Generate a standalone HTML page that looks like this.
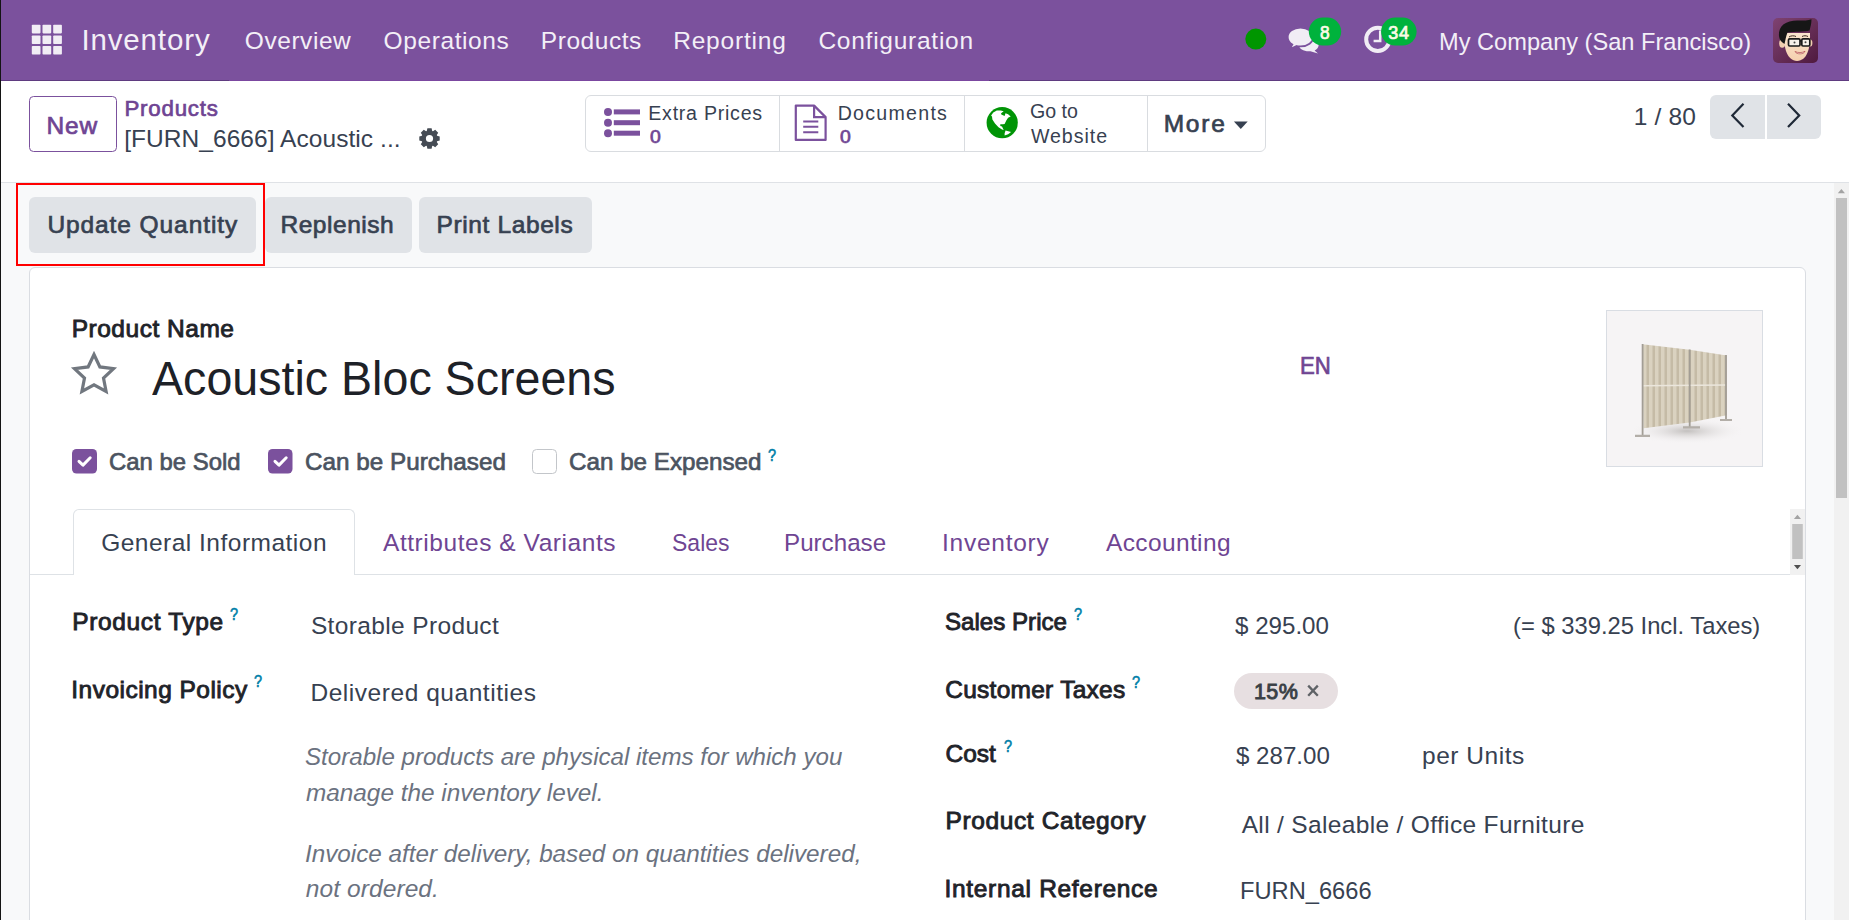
<!DOCTYPE html>
<html><head><meta charset="utf-8"><style>
html,body{margin:0;padding:0;width:1849px;height:920px;overflow:hidden;background:#fff;font-family:"Liberation Sans",sans-serif}
.a{position:absolute;box-sizing:border-box}
.t{position:absolute;white-space:nowrap;line-height:normal}
.q{font-size:16.5px;font-weight:400;-webkit-text-stroke:0.6px #0180a8;color:#0180a8;transform:scaleX(0.88);transform-origin:0 0}
</style></head><body>
<!-- content background -->
<div class="a" style="left:0;top:183px;width:1849px;height:737px;background:#f8f9fa"></div>
<!-- navbar -->
<div class="a" style="left:0;top:0;width:1849px;height:81px;background:#7b519d;border-bottom:1px solid #5f3b80"></div>
<div class="a" style="left:229px;top:80px;width:760px;height:1px;background:#7b47a0"></div>
<!-- left dark line -->
<div class="a" style="left:0;top:0;width:1px;height:920px;background:#141414"></div>
<!-- grid icon -->
<svg class="a" style="left:0;top:0" width="80" height="80">
 <g fill="#f1edf5">
  <rect x="31.8" y="24.8" width="8.7" height="8.6" rx="0.8"/><rect x="42.5" y="24.8" width="8.7" height="8.6" rx="0.8"/><rect x="53.2" y="24.8" width="8.7" height="8.6" rx="0.8"/>
  <rect x="31.8" y="35.4" width="8.7" height="8.6" rx="0.8"/><rect x="42.5" y="35.4" width="8.7" height="8.6" rx="0.8"/><rect x="53.2" y="35.4" width="8.7" height="8.6" rx="0.8"/>
  <rect x="31.8" y="46.0" width="8.7" height="8.6" rx="0.8"/><rect x="42.5" y="46.0" width="8.7" height="8.6" rx="0.8"/><rect x="53.2" y="46.0" width="8.7" height="8.6" rx="0.8"/>
 </g>
</svg>
<!-- systray icons -->
<svg class="a" style="left:1230px;top:0" width="200" height="80">
 <circle cx="25.8" cy="39.1" r="10.5" fill="#009600"/>
 <!-- comments icon -->
 <g fill="#f1edf5">
  <path d="M69 45.3 c0-3.4 4.4-6 9.8-6 s9.8 2.6 9.8 6 c0 2.2-1.6 4-4 5.1 l3.4 3.1 -7.6-2.3 c-.5.1-1 .1-1.6.1 -5.4 0-9.8-2.6-9.8-6z"/>
  <path d="M57.7 37 C57.7 31.8 63.4 27.6 70.5 27.6 S83.3 31.8 83.3 37 S77.6 46.4 70.5 46.4 C69.2 46.4 67.9 46.3 66.7 46 L59.6 49.2 L62.3 44.5 C59.5 42.9 57.7 40.2 57.7 37Z" stroke="#7b519d" stroke-width="1.8"/>
 </g>
 <rect x="78.8" y="17.6" width="32.4" height="28" rx="14" fill="#00b23c"/>
 <!-- clock -->
 <circle cx="147.8" cy="39.4" r="11.6" fill="none" stroke="#f1edf5" stroke-width="4"/>
 <path d="M150.2 30.5 v10.6 h-6.6" fill="none" stroke="#f1edf5" stroke-width="2.5"/>
 <rect x="151.1" y="17.6" width="35.5" height="28" rx="14" fill="#00b23c"/>
</svg>
<!-- avatar -->
<svg class="a" style="left:1773px;top:18px" width="45" height="45" viewBox="0 0 45 45">
 <defs><linearGradient id="ag" x1="0" y1="0" x2="1" y2="1"><stop offset="0" stop-color="#7f4372"/><stop offset="1" stop-color="#4f1a3e"/></linearGradient>
 <linearGradient id="sk" x1="0" y1="0" x2="0" y2="1"><stop offset="0" stop-color="#fbe6cf"/><stop offset="1" stop-color="#f5cfae"/></linearGradient></defs>
 <rect width="45" height="45" rx="5" fill="url(#ag)"/>
 <ellipse cx="9.2" cy="25.5" rx="3" ry="4.2" fill="#f2cfb0"/>
 <ellipse cx="37.2" cy="25" rx="2.2" ry="3.6" fill="#f2cfb0"/>
 <path d="M11 15 C10.5 30 14 42.5 24 43 C34 42.5 37.5 31 37 15 Z" fill="url(#sk)"/>
 <path d="M6 18 C5 7 14 2 26 2.5 C31 2.5 35 2.5 38.5 1.2 C38.5 5 37.5 9 36.5 12.5 C31 14 22 13.5 14.5 14.5 C13 18 12.5 22 11.5 26 C8 24 6.2 21 6 18Z" fill="#161616"/>
 <path d="M16 19 C18 17.5 21 17.5 23 18.5 M29 18.5 C31 17.5 33 17.5 35 18.5" stroke="#3a2a20" stroke-width="1" fill="none"/>
 <rect x="15.5" y="20.8" width="11.5" height="7.2" rx="1.2" fill="#f7f1ea" stroke="#1a1a1a" stroke-width="1.7"/>
 <rect x="28.8" y="20.8" width="8" height="7.2" rx="1.2" fill="#f7f1ea" stroke="#1a1a1a" stroke-width="1.7"/>
 <path d="M27 23 h1.8" stroke="#1a1a1a" stroke-width="1.5"/>
 <circle cx="21.5" cy="24.5" r="1" fill="#444"/><circle cx="32.5" cy="24.2" r="1" fill="#444"/>
 <path d="M22 33.5 C25 35 29 35 32 33.3 C31 36.5 23.5 36.8 22 33.5Z" fill="#fff" stroke="#b04040" stroke-width="0.7"/>
</svg>

<!-- control panel -->
<div class="a" style="left:1px;top:182px;width:1848px;height:1px;background:#dfe2e6"></div>
<div class="a" style="left:29px;top:96px;width:88px;height:56px;border:1px solid #7b519d;border-radius:4.5px;background:#fff"></div>
<!-- gear -->
<svg class="a" style="left:416.7px;top:125.7px" width="25" height="25" viewBox="0 0 25 25">
 <path d="M9.77,4.90 L10.40,2.30 L14.60,2.30 L15.23,4.90 L15.94,5.20 L18.23,3.80 L21.20,6.77 L19.80,9.06 L20.10,9.77 L22.70,10.40 L22.70,14.60 L20.10,15.23 L19.80,15.94 L21.20,18.23 L18.23,21.20 L15.94,19.80 L15.23,20.10 L14.60,22.70 L10.40,22.70 L9.77,20.10 L9.06,19.80 L6.77,21.20 L3.80,18.23 L5.20,15.94 L4.90,15.23 L2.30,14.60 L2.30,10.40 L4.90,9.77 L5.20,9.06 L3.80,6.77 L6.77,3.80 L9.06,5.20Z M16.10,12.50 A3.6,3.6 0 1 0 8.90,12.50 A3.6,3.6 0 1 0 16.10,12.50Z" fill="#454b54" fill-rule="evenodd"/>
</svg>
<!-- smart buttons group -->
<div class="a" style="left:584.5px;top:95px;width:681.5px;height:57px;border:1px solid #d9dce0;border-radius:6px;background:#fff"></div>
<div class="a" style="left:779px;top:96px;width:1px;height:55px;background:#d9dce0"></div>
<div class="a" style="left:964px;top:96px;width:1px;height:55px;background:#d9dce0"></div>
<div class="a" style="left:1146.5px;top:96px;width:1px;height:55px;background:#d9dce0"></div>
<!-- list icon -->
<svg class="a" style="left:600px;top:104px" width="45" height="38">
 <g fill="#7b519d">
  <circle cx="8" cy="7.9" r="4"/><circle cx="8" cy="18.7" r="4"/><circle cx="8" cy="29.2" r="4"/>
  <rect x="13.8" y="5.4" width="26.2" height="5"/><rect x="13.8" y="16.2" width="26.2" height="5"/><rect x="13.8" y="26.7" width="26.2" height="5"/>
 </g>
</svg>
<!-- document icon -->
<svg class="a" style="left:792px;top:102px" width="40" height="42">
 <path d="M3.8 3.6 h18.3 l11.5 11.5 v22.8 h-29.8z" fill="none" stroke="#7b519d" stroke-width="2.2" stroke-linejoin="round"/>
 <path d="M22.1 3.6 v11.5 h11.5" fill="none" stroke="#7b519d" stroke-width="2.2"/>
 <path d="M11.2 19.5 h15.1 M11.2 24.7 h15.1 M11.2 30.3 h15.1" stroke="#7b519d" stroke-width="2.1"/>
</svg>
<!-- globe -->
<svg class="a" style="left:984px;top:104px" width="36" height="37" viewBox="0 0 36 37">
 <circle cx="18.2" cy="18.7" r="15.6" fill="#009406"/>
 <path d="M7.1 11.6 L9.3 8.6 L12.8 6.6 L16.7 6.4 L19.7 7.3 L17.1 9.2 L17.3 10.5 L20.6 12 L21.5 9.2 L24.1 10.3 L26.7 12.5 L24.1 13.8 L22.3 16.4 L20.6 19.9 L18.9 20.3 L16.3 20.3 L16.3 22 L18 22.5 L19.7 26 L18 25.5 L14.5 23.3 L11 19.4 L8.4 15.5 L8 12.5Z" fill="#fff"/>
 <path d="M21.5 26.4 L27.1 28.1 L24.1 30.3 L20.6 31.6 L20.6 29.4Z" fill="#fff"/>
</svg>
<!-- caret -->
<svg class="a" style="left:1230px;top:118px" width="22" height="15">
 <path d="M3.9 3.5 h13.8 l-6.9 7.6z" fill="#374151"/>
</svg>
<!-- pager buttons -->
<div class="a" style="left:1710px;top:95px;width:55px;height:43.5px;background:#e0e3e7;border-radius:6px 0 0 6px"></div>
<div class="a" style="left:1767px;top:95px;width:54px;height:43.5px;background:#e0e3e7;border-radius:0 6px 6px 0"></div>
<svg class="a" style="left:1710px;top:95px" width="111" height="44">
 <path d="M33.5 8.8 l-11.2 11.6 11.2 11.6" fill="none" stroke="#1f2937" stroke-width="2.2"/>
 <path d="M78 8.8 l11.2 11.6 -11.2 11.6" fill="none" stroke="#1f2937" stroke-width="2.2"/>
</svg>

<!-- action buttons -->
<div class="a" style="left:29px;top:197px;width:227px;height:56px;background:#e0e3e7;border-radius:6px"></div>
<div class="a" style="left:265px;top:197px;width:147px;height:56px;background:#e0e3e7;border-radius:6px"></div>
<div class="a" style="left:419px;top:197px;width:173px;height:56px;background:#e0e3e7;border-radius:6px"></div>
<div class="a" style="left:16px;top:183px;width:249px;height:83px;border:2px solid #ff0000"></div>

<!-- main scrollbar -->
<div class="a" style="left:1834px;top:183px;width:15px;height:737px;background:#f1f1f1"></div>
<svg class="a" style="left:1834px;top:183px" width="15" height="20"><path d="M3.8 10.3 h7.2 l-3.6-4.3z" fill="#a3a3a3"/></svg>
<div class="a" style="left:1836px;top:198px;width:11px;height:300px;background:#c1c1c1"></div>

<!-- sheet -->
<div class="a" style="left:29px;top:267px;width:1777px;height:700px;background:#fff;border:1px solid #dadde2;border-radius:6px"></div>

<!-- star -->
<svg class="a" style="left:68px;top:349px" width="52" height="50" viewBox="0 0 52 50">
 <path d="M26 5.5 l5.9 12.4 13.6 1.7 -10 9.4 2.6 13.5 -12.1-6.6 -12.1 6.6 2.6-13.5 -10-9.4 13.6-1.7z" fill="none" stroke="#71777f" stroke-width="3.2" stroke-linejoin="miter"/>
</svg>

<!-- product image -->
<div class="a" style="left:1606px;top:310px;width:157px;height:157px;border:1px solid #d9dde3;background:#f6f4f5"></div>
<svg class="a" style="left:1607px;top:311px" width="155" height="155" viewBox="0 0 155 155">
 <defs><radialGradient id="sh" cx="0.5" cy="0.5" r="0.5"><stop offset="0" stop-color="#bdbab8" stop-opacity="0.9"/><stop offset="1" stop-color="#f6f4f5" stop-opacity="0"/></radialGradient>
 <pattern id="rib" width="6" height="10" patternUnits="userSpaceOnUse"><rect width="6" height="10" fill="#dad2c0"/><rect x="3.5" width="2.5" height="10" fill="#c5bba6"/></pattern></defs>
 <ellipse cx="80" cy="120" rx="58" ry="13" fill="url(#sh)"/>
 <path d="M35.4 33.3 L82.7 38.8 L82.7 111.6 L36.5 117.2 Z" fill="url(#rib)"/>
 <path d="M82.7 38.8 L119.7 44.4 L119.7 104.2 L82.7 111.6 Z" fill="url(#rib)"/>
 <path d="M36 74.7 L119.7 73.9" stroke="#ebe6dc" stroke-width="1.5"/>
 <path d="M35.6 33 V124.5 M82.7 38.5 V116 M119 44 V108.7" stroke="#a29d95" stroke-width="1.8"/>
 <path d="M28 124.8 h15 M76 116.3 h17 M113 109 h12" stroke="#b3aea8" stroke-width="2.2"/>
</svg>

<!-- checkboxes -->
<svg class="a" style="left:72px;top:449px" width="25" height="25"><rect x="0" y="0" width="25" height="24.5" rx="4.5" fill="#7b519d"/><path d="M7 12.3 l4 3.8 7.2-7.3" fill="none" stroke="#fff" stroke-width="3" stroke-linecap="round" stroke-linejoin="round"/></svg>
<svg class="a" style="left:268px;top:449px" width="25" height="25"><rect x="0" y="0" width="24.5" height="24.5" rx="4.5" fill="#7b519d"/><path d="M7 12.3 l4 3.8 7.2-7.3" fill="none" stroke="#fff" stroke-width="3" stroke-linecap="round" stroke-linejoin="round"/></svg>
<div class="a" style="left:532px;top:449px;width:25px;height:24.5px;border:1px solid #c3c6ca;border-radius:4.5px;background:#fff"></div>

<!-- tabs -->
<div class="a" style="left:29.5px;top:574px;width:1761px;height:1px;background:#dee2e6"></div>
<div class="a" style="left:72.5px;top:509px;width:282.5px;height:66px;border:1px solid #dee2e6;border-bottom:none;border-radius:6px 6px 0 0;background:#fff"></div>
<!-- tab scrollbar -->
<div class="a" style="left:1790px;top:509px;width:15px;height:66px;background:#f1f1f1"></div>
<svg class="a" style="left:1790px;top:509px" width="15" height="66">
 <path d="M3.9 10 h7.1 l-3.55-4.2z" fill="#a3a3a3"/>
 <rect x="2.2" y="15" width="10.6" height="35" fill="#c1c1c1"/>
 <path d="M3.9 56 h7.1 l-3.55 4.2z" fill="#505050"/>
</svg>

<!-- tag -->
<div class="a" style="left:1234px;top:673px;width:104px;height:36px;border-radius:18px;background:#e7dfe1"></div>
<svg class="a" style="left:1303px;top:680px" width="20" height="22"><path d="M5.2 5.6 l9.6 10.2 M14.8 5.6 l-9.6 10.2" stroke="#5f6266" stroke-width="2.3"/></svg>

<div class="t" style="left:81.40px;top:22.50px;color:#f3eff7;font-size:29.5px;font-weight:400;letter-spacing:0.863px;">Inventory</div>
<div class="t" style="left:244.80px;top:27.20px;color:#f3eff7;font-size:24.5px;font-weight:400;letter-spacing:0.557px;">Overview</div>
<div class="t" style="left:383.60px;top:27.10px;color:#f3eff7;font-size:24.5px;font-weight:400;letter-spacing:0.589px;">Operations</div>
<div class="t" style="left:540.80px;top:27.10px;color:#f3eff7;font-size:24.5px;font-weight:400;letter-spacing:0.543px;">Products</div>
<div class="t" style="left:673.20px;top:27.00px;color:#f3eff7;font-size:24.5px;font-weight:400;letter-spacing:0.800px;">Reporting</div>
<div class="t" style="left:818.40px;top:27.00px;color:#f3eff7;font-size:24.5px;font-weight:400;letter-spacing:0.750px;">Configuration</div>
<div class="t" style="left:1438.50px;top:27.80px;color:#f3eff7;font-size:24.5px;font-weight:400;letter-spacing:0.000px;transform:scaleX(0.963);transform-origin:2.0px 0;">My Company (San Francisco)</div>
<div class="t" style="left:1320.40px;top:22.70px;color:#fbfbe6;font-size:18px;font-weight:400;-webkit-text-stroke:0.7px currentColor;letter-spacing:0.000px;transform:scaleX(0.960);transform-origin:0.0px 0;">8</div>
<div class="t" style="left:1388.20px;top:22.70px;color:#fbfbe6;font-size:18px;font-weight:400;-webkit-text-stroke:0.7px currentColor;letter-spacing:0.800px;">34</div>
<div class="t" style="left:46.60px;top:111.50px;color:#6f4593;font-size:24.5px;font-weight:400;-webkit-text-stroke:0.7px currentColor;letter-spacing:0.750px;">New</div>
<div class="t" style="left:124.40px;top:96.40px;color:#6f4593;font-size:22.3px;font-weight:400;-webkit-text-stroke:0.7px currentColor;letter-spacing:0.786px;">Products</div>
<div class="t" style="left:124.20px;top:124.80px;color:#374151;font-size:24.5px;font-weight:400;letter-spacing:0.057px;">[FURN_6666] Acoustic ...</div>
<div class="t" style="left:648.30px;top:102.40px;color:#374151;font-size:19.6px;font-weight:400;letter-spacing:0.745px;">Extra Prices</div>
<div class="t" style="left:650.30px;top:125.60px;color:#6f4593;font-size:18.5px;font-weight:400;-webkit-text-stroke:0.7px currentColor;letter-spacing:0.000px;transform:scaleX(1.050);transform-origin:0.0px 0;">0</div>
<div class="t" style="left:837.70px;top:102.40px;color:#374151;font-size:19.6px;font-weight:400;letter-spacing:1.262px;">Documents</div>
<div class="t" style="left:839.70px;top:125.60px;color:#6f4593;font-size:18.5px;font-weight:400;-webkit-text-stroke:0.7px currentColor;letter-spacing:0.000px;transform:scaleX(1.050);transform-origin:0.0px 0;">0</div>
<div class="t" style="left:1029.90px;top:99.50px;color:#374151;font-size:19.6px;font-weight:400;letter-spacing:0.000px;">Go to</div>
<div class="t" style="left:1030.90px;top:125.40px;color:#374151;font-size:19.6px;font-weight:400;letter-spacing:0.967px;">Website</div>
<div class="t" style="left:1163.70px;top:110.00px;color:#374151;font-size:24.5px;font-weight:400;-webkit-text-stroke:0.7px currentColor;letter-spacing:1.767px;">More</div>
<div class="t" style="left:1633.80px;top:102.80px;color:#374151;font-size:24.5px;font-weight:400;letter-spacing:0.140px;">1 / 80</div>
<div class="t" style="left:47.40px;top:210.60px;color:#374151;font-size:24.5px;font-weight:400;-webkit-text-stroke:0.7px currentColor;letter-spacing:0.914px;">Update Quantity</div>
<div class="t" style="left:280.40px;top:210.60px;color:#374151;font-size:24.5px;font-weight:400;-webkit-text-stroke:0.7px currentColor;letter-spacing:0.550px;">Replenish</div>
<div class="t" style="left:436.60px;top:210.60px;color:#374151;font-size:24.5px;font-weight:400;-webkit-text-stroke:0.7px currentColor;letter-spacing:0.609px;">Print Labels</div>
<div class="t" style="left:71.70px;top:315.00px;color:#1f2329;font-size:24.5px;font-weight:400;-webkit-text-stroke:0.9px currentColor;letter-spacing:0.518px;">Product Name</div>
<div class="t" style="left:152.20px;top:350.90px;color:#1d2127;font-size:47.6px;font-weight:400;letter-spacing:0.000px;transform:scaleX(0.979);transform-origin:0.0px 0;">Acoustic Bloc Screens</div>
<div class="t" style="left:1299.90px;top:351.70px;color:#6f4593;font-size:24px;font-weight:400;-webkit-text-stroke:0.7px currentColor;letter-spacing:0.000px;transform:scaleX(0.923);transform-origin:1.0px 0;">EN</div>
<div class="t" style="left:109.30px;top:447.80px;color:#4b5360;font-size:24.5px;font-weight:400;-webkit-text-stroke:0.7px currentColor;letter-spacing:0.000px;transform:scaleX(0.976);transform-origin:1.0px 0;">Can be Sold</div>
<div class="t" style="left:304.80px;top:447.80px;color:#4b5360;font-size:24.5px;font-weight:400;-webkit-text-stroke:0.7px currentColor;letter-spacing:0.000px;transform:scaleX(0.990);transform-origin:1.0px 0;">Can be Purchased</div>
<div class="t" style="left:568.80px;top:447.80px;color:#4b5360;font-size:24.5px;font-weight:400;-webkit-text-stroke:0.7px currentColor;letter-spacing:0.000px;transform:scaleX(0.988);transform-origin:1.0px 0;">Can be Expensed</div>
<div class="t" style="left:101.20px;top:528.80px;color:#374151;font-size:24.5px;font-weight:400;letter-spacing:0.489px;">General Information</div>
<div class="t" style="left:383.00px;top:528.80px;color:#6f4593;font-size:24.5px;font-weight:400;letter-spacing:0.550px;">Attributes &amp; Variants</div>
<div class="t" style="left:671.50px;top:528.80px;color:#6f4593;font-size:24.5px;font-weight:400;letter-spacing:0.000px;transform:scaleX(0.937);transform-origin:1.0px 0;">Sales</div>
<div class="t" style="left:784.00px;top:528.80px;color:#6f4593;font-size:24.5px;font-weight:400;letter-spacing:0.000px;transform:scaleX(0.986);transform-origin:2.0px 0;">Purchase</div>
<div class="t" style="left:942.00px;top:528.80px;color:#6f4593;font-size:24.5px;font-weight:400;letter-spacing:0.750px;">Inventory</div>
<div class="t" style="left:1106.00px;top:528.80px;color:#6f4593;font-size:24.5px;font-weight:400;letter-spacing:0.367px;">Accounting</div>
<div class="t" style="left:72.30px;top:607.90px;color:#1f2329;font-size:24.5px;font-weight:400;-webkit-text-stroke:0.9px currentColor;letter-spacing:0.636px;">Product Type</div>
<div class="t" style="left:71.30px;top:676.00px;color:#1f2329;font-size:24.5px;font-weight:400;-webkit-text-stroke:0.9px currentColor;letter-spacing:0.473px;">Invoicing Policy</div>
<div class="t" style="left:310.90px;top:612.00px;color:#374151;font-size:24.5px;font-weight:400;letter-spacing:0.360px;">Storable Product</div>
<div class="t" style="left:310.40px;top:679.30px;color:#374151;font-size:24.5px;font-weight:400;letter-spacing:0.547px;">Delivered quantities</div>
<div class="t" style="left:304.70px;top:742.80px;color:#6b7280;font-size:24.5px;font-weight:400;font-style:italic;letter-spacing:0.000px;transform:scaleX(0.984);transform-origin:1.0px 0;">Storable products are physical items for which you</div>
<div class="t" style="left:305.70px;top:779.40px;color:#6b7280;font-size:24.5px;font-weight:400;font-style:italic;letter-spacing:0.000px;transform:scaleX(0.993);transform-origin:0.0px 0;">manage the inventory level.</div>
<div class="t" style="left:304.70px;top:839.50px;color:#6b7280;font-size:24.5px;font-weight:400;font-style:italic;letter-spacing:0.000px;transform:scaleX(0.990);transform-origin:1.0px 0;">Invoice after delivery, based on quantities delivered,</div>
<div class="t" style="left:305.70px;top:875.30px;color:#6b7280;font-size:24.5px;font-weight:400;font-style:italic;letter-spacing:0.100px;">not ordered.</div>
<div class="t" style="left:945.20px;top:607.90px;color:#1f2329;font-size:24.5px;font-weight:400;-webkit-text-stroke:0.9px currentColor;letter-spacing:0.000px;transform:scaleX(0.984);transform-origin:1.0px 0;">Sales Price</div>
<div class="t" style="left:945.20px;top:676.00px;color:#1f2329;font-size:24.5px;font-weight:400;-webkit-text-stroke:0.9px currentColor;letter-spacing:0.269px;">Customer Taxes</div>
<div class="t" style="left:945.50px;top:739.70px;color:#1f2329;font-size:24.5px;font-weight:400;-webkit-text-stroke:0.9px currentColor;letter-spacing:0.000px;">Cost</div>
<div class="t" style="left:945.50px;top:806.80px;color:#1f2329;font-size:24.5px;font-weight:400;-webkit-text-stroke:0.9px currentColor;letter-spacing:0.620px;">Product Category</div>
<div class="t" style="left:944.50px;top:874.50px;color:#1f2329;font-size:24.5px;font-weight:400;-webkit-text-stroke:0.9px currentColor;letter-spacing:0.682px;">Internal Reference</div>
<div class="t" style="left:1235.40px;top:612.00px;color:#374151;font-size:24.5px;font-weight:400;letter-spacing:0.000px;transform:scaleX(0.985);transform-origin:0.0px 0;">$ 295.00</div>
<div class="t" style="left:1512.80px;top:612.00px;color:#374151;font-size:24.5px;font-weight:400;letter-spacing:0.000px;transform:scaleX(0.970);transform-origin:1.0px 0;">(= $ 339.25 Incl. Taxes)</div>
<div class="t" style="left:1253.90px;top:679.50px;color:#3a3f45;font-size:21.5px;font-weight:400;-webkit-text-stroke:0.9px currentColor;letter-spacing:0.500px;">15%</div>
<div class="t" style="left:1235.50px;top:742.40px;color:#374151;font-size:24.5px;font-weight:400;letter-spacing:0.000px;transform:scaleX(0.984);transform-origin:0.0px 0;">$ 287.00</div>
<div class="t" style="left:1422.00px;top:742.40px;color:#374151;font-size:24.5px;font-weight:400;letter-spacing:0.525px;">per Units</div>
<div class="t" style="left:1241.70px;top:810.60px;color:#374151;font-size:24.5px;font-weight:400;letter-spacing:0.338px;">All / Saleable / Office Furniture</div>
<div class="t" style="left:1240.30px;top:877.30px;color:#374151;font-size:24.5px;font-weight:400;letter-spacing:0.000px;transform:scaleX(0.966);transform-origin:2.0px 0;">FURN_6666</div>
<div class="t q" style="left:230.00px;top:605.40px">?</div>
<div class="t q" style="left:254.30px;top:672.30px">?</div>
<div class="t q" style="left:768.20px;top:445.60px">?</div>
<div class="t q" style="left:1074.00px;top:604.80px">?</div>
<div class="t q" style="left:1131.60px;top:673.30px">?</div>
<div class="t q" style="left:1003.50px;top:737.30px">?</div>
</body></html>
